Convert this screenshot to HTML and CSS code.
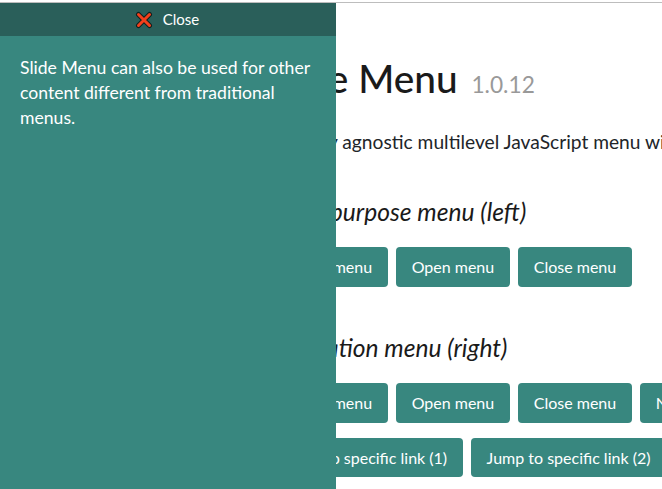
FILE: index.html
```html
<!DOCTYPE html>
<html lang="en">
<head>
<meta charset="utf-8">
<title>Slide Menu</title>
<link rel="stylesheet" href="styles.css">
</head>
<body>
<div class="topline"></div>
<main class="page">
  <h1 class="title">Slide Menu <small class="version">1.0.12</small></h1>
  <p class="lead">A library agnostic multilevel JavaScript menu with</p>
  <h2 class="section">Multi-purpose menu (left)</h2>
  <div class="row">
    <a class="btn">Toggle menu</a><a class="btn">Open menu</a><a class="btn">Close menu</a>
  </div>
  <h2 class="section section-2">Navigation menu (right)</h2>
  <div class="row">
    <a class="btn">Toggle menu</a><a class="btn">Open menu</a><a class="btn">Close menu</a><a class="btn">Navigate back</a>
  </div>
  <div class="row row-2">
    <a class="btn">Jump to specific link (1)</a><a class="btn">Jump to specific link (2)</a>
  </div>
</main>
<aside class="slide-menu">
  <div class="menu-head">
    <svg class="x" width="18" height="18" viewBox="0 0 18 18" aria-hidden="true">
      <path d="M3.5 3.5 14.5 14.5M14.5 3.5 3.5 14.5" stroke="#10201e" stroke-width="5" stroke-linecap="round" fill="none"/>
      <path d="M3.5 3.5 14.5 14.5M14.5 3.5 3.5 14.5" stroke="#f4401c" stroke-width="3" stroke-linecap="round" fill="none"/>
    </svg>
    <span>Close</span>
  </div>
  <p class="menu-text">Slide Menu can also be used for other content different from traditional menus.</p>
</aside>
</body>
</html>
```
FILE: styles.css
```css
* { box-sizing: border-box; }
html, body { height: 100%; }
body {
  margin: 0;
  padding-top: 2px;
  overflow: hidden;
  background: #fff;
  color: #212529;
  font: 400 16px/1.5 Lato, sans-serif;
}
.topline { height: 1px; background: #bdbdbd; }
.page { margin-left: 267.5px; width: 600px; padding-top: 51px; }
.title { margin: 0 0 0 -1px; font-size: 38.8px; font-weight: 500; line-height: 48px; color: #1a1a1a; white-space: nowrap; }
.version { font-size: 22.7px; font-weight: 400; color: #999; margin-left: 4px; }
.lead { margin: 19px 0 0; font-size: 19.2px; line-height: 28px; white-space: nowrap; }
.section { margin: 41px 0 0; font-size: 24.6px; font-weight: 400; font-style: italic; line-height: 30px; white-space: nowrap; color: #1a1a1a; }
.section-2 { margin-top: 46px; }
.row { display: flex; gap: 8px; margin-top: 20px; }
.row-2 { margin-top: 15px; }
.btn {
  flex: none;
  padding: 8px 15.75px;
  height: 40px;
  background: #38877f;
  color: #fff;
  border-radius: 4px;
  font-size: 16px;
  white-space: nowrap;
}
.row-2 .btn { height: 39px; padding-top: 7.5px; }
.slide-menu {
  position: absolute;
  left: 0; top: 3px; bottom: 0;
  width: 336px;
  background: #38877f;
  color: #fff;
}
.menu-head {
  height: 33px;
  padding-right: 2px;
  background: #2a5f5a;
  display: flex;
  align-items: center;
  justify-content: center;
  gap: 10px;
  font-size: 15px;
}
.x { flex: none; }
.menu-text { margin: 0; padding: 19px 20px 0; font-size: 17.6px; line-height: 25.2px; }
```
